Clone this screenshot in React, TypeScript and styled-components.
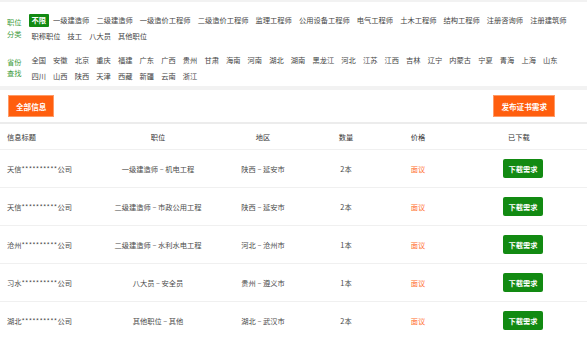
import React from "react";
import styled, { createGlobalStyle } from "styled-components";

const GlobalStyle = createGlobalStyle`
  html, body { margin: 0; padding: 0; }
  body {
    background: #f2f2f2;
    font-family: "Noto Sans CJK SC", "Noto Sans", "Liberation Sans", sans-serif;
    color: #333;
  }
  * { box-sizing: border-box; }
`;

const Page = styled.div`
  padding-top: 2px;
  display: flex;
  flex-direction: column;
  gap: 4px;
`;

const FilterPanel = styled.div`
  background: #fff;
  padding: 10.5px 10px 2px 0;
  display: flex;
  flex-direction: column;
  gap: 7.5px;
`;

const Group = styled.div`
  display: flex;
  align-items: center;
`;

const GroupLabel = styled.div`
  width: 29px;
  padding-left: 7px;
  font-size: 7.25px;
  line-height: 11.5px;
  color: #3a9a3a;
  flex-shrink: 0;
`;

const Items = styled.div`
  flex: 1;
  display: flex;
  flex-wrap: wrap;
`;

const Item = styled.span<{ $active?: boolean }>`
  height: 16px;
  display: flex;
  align-items: center;
  margin-right: 2.1px;
  font-size: 7.25px;
  white-space: nowrap;
  & > span {
    display: block;
    padding: 0 2.5px;
    line-height: 13px;
    height: 13px;
    border-radius: 1px;
    background: ${(p) => (p.$active ? "#128a12" : "transparent")};
    color: ${(p) => (p.$active ? "#fff" : "#444")};
    font-weight: ${(p) => (p.$active ? 700 : 400)};
  }
`;

const ListPanel = styled.div`
  background: #fff;
`;

const Toolbar = styled.div`
  height: 34px;
  display: flex;
  align-items: center;
  justify-content: space-between;
  padding: 0 32px 0 8px;
  border-bottom: 2px solid #ececec;
`;

const OrangeButton = styled.button`
  height: 22px;
  padding: 0 7px;
  border: 1px solid #ff9a66;
  background: #ff5e0e;
  color: #fff;
  font-family: inherit;
  font-size: 7.6px;
  font-weight: 700;
  cursor: pointer;
`;

const Row = styled.div<{ $head?: boolean }>`
  display: grid;
  grid-template-columns: 105px 106px 104px 62px 82px 1fr;
  align-items: center;
  height: ${(p) => (p.$head ? "26px" : "38px")};
  border-bottom: 1px solid #f0f0f0;
  font-size: 7.25px;
  color: ${(p) => (p.$head ? "#333" : "#4a4a4a")};
`;

const Cell = styled.div<{ $left?: boolean; $shift?: number }>`
  padding-left: ${(p) => (p.$left ? "7px" : "0")};
  white-space: nowrap;
  display: flex;
  justify-content: ${(p) => (p.$left ? "flex-start" : "center")};
  margin-right: ${(p) => (p.$shift ? `${p.$shift}px` : "0")};
`;

const Stars = styled.span`
  letter-spacing: 0.2px;
`;

const Price = styled.span`
  color: #ff6d2a;
`;

const GreenButton = styled.button`
  width: 40px;
  height: 19px;
  padding: 0;
  border: none;
  border-radius: 2px;
  background: #128a12;
  color: #fff;
  font-family: inherit;
  font-size: 7.25px;
  font-weight: 700;
  cursor: pointer;
`;

const jobs = [
  "一级建造师",
  "二级建造师",
  "一级造价工程师",
  "二级造价工程师",
  "监理工程师",
  "公用设备工程师",
  "电气工程师",
  "土木工程师",
  "结构工程师",
  "注册咨询师",
  "注册建筑师",
  "职称职位",
  "技工",
  "八大员",
  "其他职位",
];

const provinces = [
  "全国", "安徽", "北京", "重庆", "福建", "广东", "广西", "贵州", "甘肃", "海南",
  "河南", "湖北", "湖南", "黑龙江", "河北", "江苏", "江西", "吉林", "辽宁", "内蒙古",
  "宁夏", "青海", "上海", "山东", "四川", "山西", "陕西", "天津", "西藏", "新疆",
  "云南", "浙江",
];

const rows = [
  { city: "天信", job: "一级建造师 – 机电工程", area: "陕西 – 延安市", qty: "2本" },
  { city: "天信", job: "二级建造师 – 市政公用工程", area: "陕西 – 延安市", qty: "2本" },
  { city: "沧州", job: "二级建造师 – 水利水电工程", area: "河北 – 沧州市", qty: "1本" },
  { city: "习水", job: "八大员 – 安全员", area: "贵州 – 遵义市", qty: "1本" },
  { city: "湖北", job: "其他职位 – 其他", area: "湖北 – 武汉市", qty: "2本" },
];

export default function App() {
  return (
    <>
      <GlobalStyle />
      <Page>
        <FilterPanel>
          <Group>
            <GroupLabel>职位<br />分类</GroupLabel>
            <Items>
              <Item $active><span>不限</span></Item>
              {jobs.map((j) => (
                <Item key={j}><span>{j}</span></Item>
              ))}
            </Items>
          </Group>
          <Group>
            <GroupLabel>省份<br />查找</GroupLabel>
            <Items>
              {provinces.map((p) => (
                <Item key={p}><span>{p}</span></Item>
              ))}
            </Items>
          </Group>
        </FilterPanel>
        <ListPanel>
          <Toolbar>
            <OrangeButton>全部信息</OrangeButton>
            <OrangeButton>发布证书需求</OrangeButton>
          </Toolbar>
          <Row $head>
            <Cell $left>信息标题</Cell>
            <Cell>职位</Cell>
            <Cell>地区</Cell>
            <Cell>数量</Cell>
            <Cell>价格</Cell>
            <Cell $shift={8}>已下载</Cell>
          </Row>
          {rows.map((r, i) => (
            <Row key={i}>
              <Cell $left>{r.city}<Stars>**********</Stars>公司</Cell>
              <Cell>{r.job}</Cell>
              <Cell>{r.area}</Cell>
              <Cell>{r.qty}</Cell>
              <Cell><Price>面议</Price></Cell>
              <Cell><GreenButton>下载需求</GreenButton></Cell>
            </Row>
          ))}
        </ListPanel>
      </Page>
    </>
  );
}
